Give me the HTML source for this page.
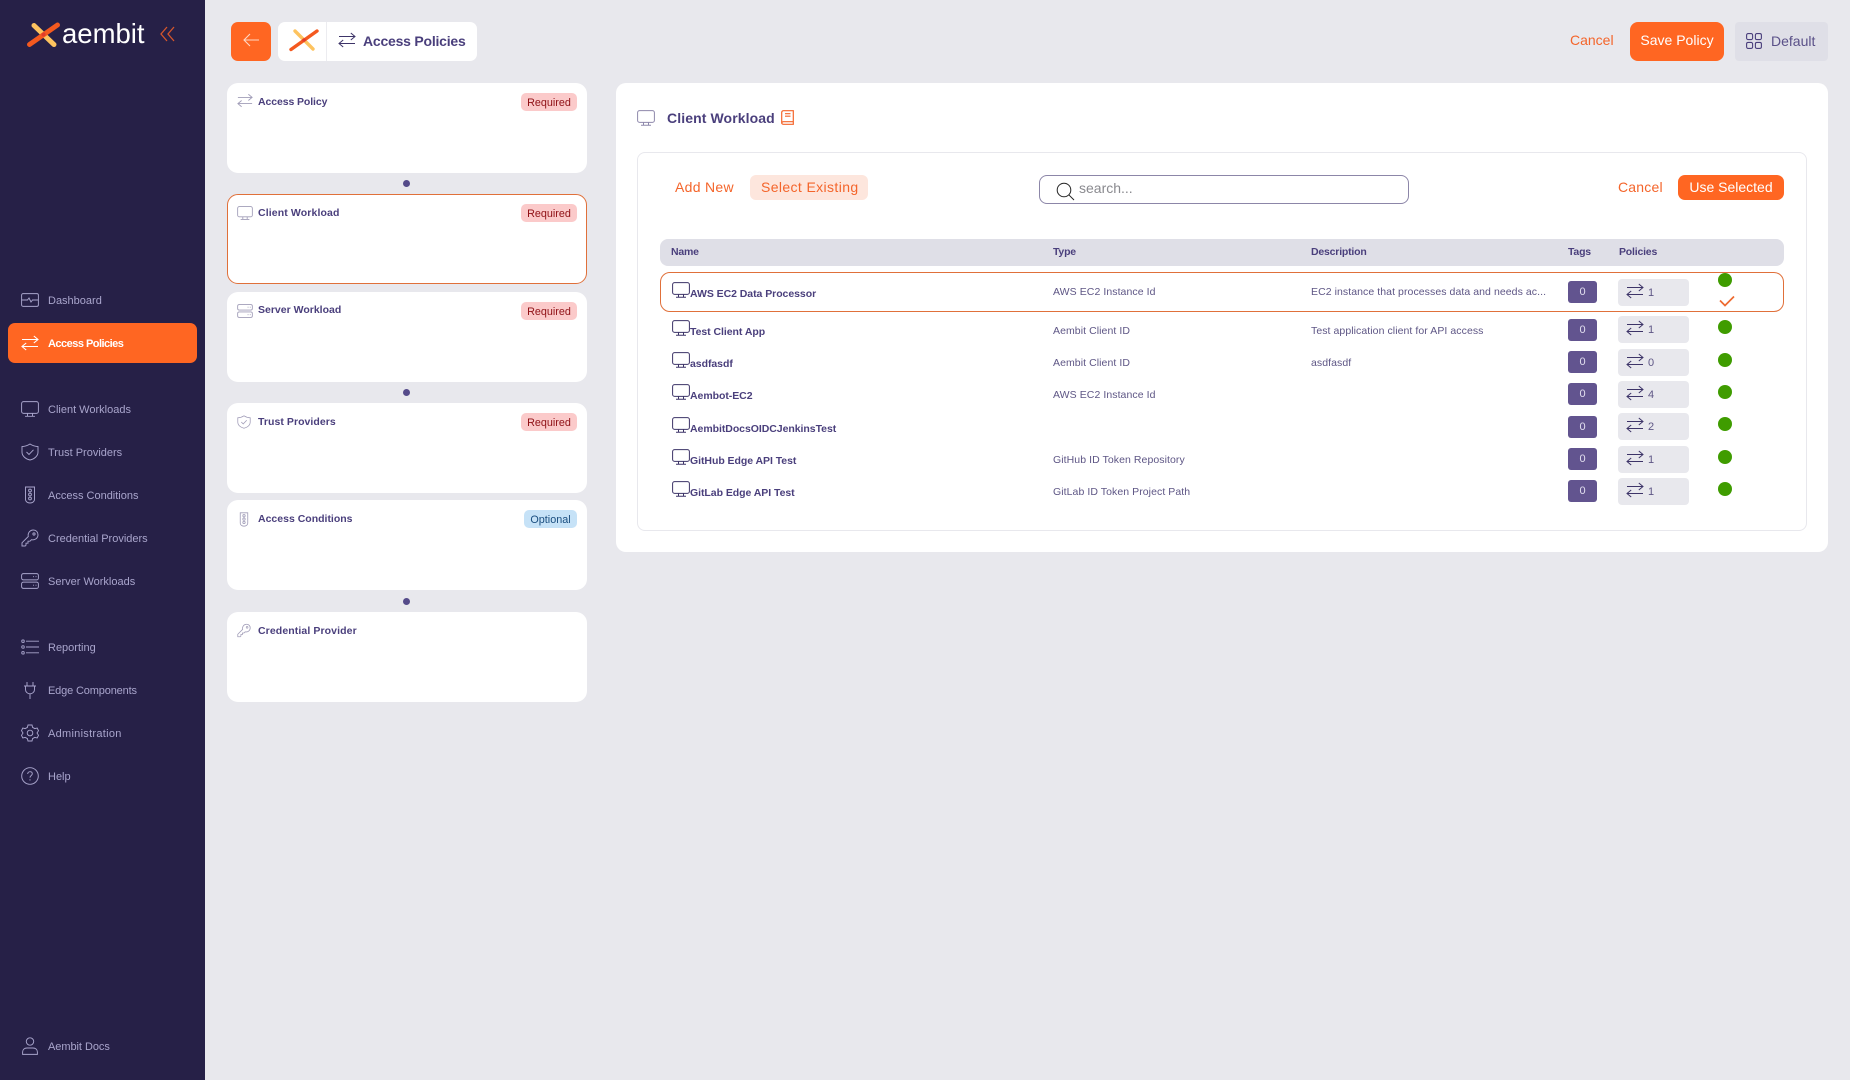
<!DOCTYPE html>
<html><head><meta charset="utf-8"><title>Access Policies</title>
<style>
html,body{margin:0;padding:0;width:1850px;height:1080px;overflow:hidden;background:#e8e8ed;font-family:"Liberation Sans",sans-serif}
.a{position:absolute}
.t{position:absolute;white-space:nowrap;line-height:20px;height:20px}
.nav{color:#a9a5cc;font-size:11px;left:48px;margin-top:1px}
.ic{position:absolute;fill:none;stroke:#a9a5cc;stroke-width:.95}
.card{position:absolute;left:227px;width:360px;height:90px;background:#fff;border-radius:11px}
.dot{position:absolute;left:403px;width:7px;height:7px;border-radius:50%;background:#554b8a}
.ct{left:258px;font-size:10.5px;font-weight:bold;color:#4a3f7c;letter-spacing:0;margin-top:1px}
.ci{position:absolute;left:237px;fill:none;stroke:#a19db8;stroke-width:1}
.bd{position:absolute;left:521px;width:56px;height:18px;line-height:20px;border-radius:5px;background:#fbcaca;color:#8f1015;font-size:10.8px;text-align:center}
.op{left:524px;width:53px;background:#c6e2f7;color:#1b4f80}
.n{left:690px;font-size:10.5px;font-weight:bold;color:#4a3f7c;letter-spacing:-.05px;margin-top:1px}
.ty{left:1053px;font-size:10.5px;color:#5e5685;letter-spacing:.07px;margin-top:1px}
.de{left:1311px;font-size:10.5px;color:#5e5685;letter-spacing:.07px;margin-top:1px}
.h{font-size:10.5px;font-weight:bold;color:#4a3f7c;letter-spacing:-.2px;margin-top:1px}
.tag{position:absolute;left:1568px;width:29px;height:22px;line-height:22px;background:#62548f;color:#e2dfef;border-radius:3px;font-size:11px;text-align:center}
.pol{position:absolute;left:1618px;width:71px;height:27px;background:#e8e8ed;border-radius:4px;border-bottom:0}
.pol svg{position:absolute;left:8px;top:4px;fill:none;stroke:#3d3468;stroke-width:1}
.pol span{position:absolute;left:30px;top:4px;line-height:20px;font-size:11px;color:#5e5685}
.g{position:absolute;left:1718px;width:14px;height:14px;border-radius:50%;background:#3f9c00}
.mon{position:absolute;left:672px;fill:none;stroke:#3d3468;stroke-width:1}
.or{color:#f4652b;font-size:14px}
</style></head>
<body>
<svg width="0" height="0" style="position:absolute">
<symbol id="arr" viewBox="0 0 18 16"><path d="M1 4.5H17M12.8 1L17 4.5L12.8 8M17 11.5H1M5.2 8L1 11.5L5.2 15"/></symbol>
<symbol id="mon" viewBox="0 0 18 16"><rect x=".6" y=".6" width="16.8" height="11.8" rx="2"/><path d="M6.5 12.5V15M11.5 12.5V15M4 15.3H14"/></symbol>
<symbol id="shield" viewBox="0 0 18 18"><path d="M9 1C11.5 2.6 14 3.4 17 3.6V9C17 13 13.5 16 9 17C4.5 16 1 13 1 9V3.6C4 3.4 6.5 2.6 9 1Z"/><path d="M5.5 9L8 11.5L12.5 6.8"/></symbol>
<symbol id="light" viewBox="0 0 14 18"><path d="M2.5 1H11.5V13.5C11.5 15.5 9.5 17 7 17C4.500 17 2.500 15.500 2.500 13.500Z"/><circle cx="7" cy="4.500" r="1.400"/><circle cx="7" cy="8.500" r="1.400"/><circle cx="7" cy="12.500" r="1.400"/></symbol>
<symbol id="key" viewBox="0 0 18 18"><path d="M1 17V13.800L7.300 7.500C6.500 4 9 1 12.300 1C15 1 17 3 17 5.700C17 9 14 11.500 10.500 10.700L9 12.200H7V14.200H5V16.200L4.200 17Z"/><circle cx="13" cy="5" r="1.100"/></symbol>
<symbol id="srv" viewBox="0 0 18 16"><rect x=".6" y=".6" width="16.800" height="6.300" rx="1.800"/><rect x=".6" y="9.100" width="16.800" height="6.300" rx="1.800"/><path d="M12 3.700H13M14.500 3.700H15.500M12 12.200H13M14.500 12.200H15.500"/></symbol>
</svg>

<!-- sidebar -->
<div class="a" style="left:0;top:0;width:205px;height:1080px;background:#262047"></div>
<svg class="a" style="left:26px;top:21px" width="36" height="27" viewBox="0 0 36 27" fill="none" stroke-linecap="round"><path d="M8 4.500L28 23.500" stroke="#fdc35f" stroke-width="5"/><path d="M3.500 23.500L31.500 4" stroke="#f4591f" stroke-width="5"/><circle cx="17.500" cy="13.500" r="2" fill="#e23c2a"/></svg>
<div class="t" style="left:62px;top:19px;height:30px;line-height:30px;font-size:27.5px;color:#fff">aembit</div>
<svg class="a" style="left:159px;top:25px" width="18" height="18" viewBox="0 0 18 18" fill="none" stroke="#d5562c" stroke-width="1.300"><path d="M8 2L2 9L8 16M15 2L9 9L15 16"/></svg>

<svg class="ic" style="left:21px;top:293px" width="18" height="14" viewBox="0 0 18 14"><rect x=".6" y=".6" width="16.800" height="12.800" rx="1.500"/><path d="M1 7H6.500L8 5L10 9L11.500 7H17"/></svg>
<div class="t nav" style="top:290px">Dashboard</div>
<div class="a" style="left:8px;top:323px;width:189px;height:40px;background:#ff6622;border-radius:7px"></div>
<svg class="a" style="left:21px;top:335px;fill:none;stroke:#fff;stroke-width:1.100" width="18" height="16"><use href="#arr"/></svg>
<div class="t" style="left:48px;top:334px;font-size:11px;color:#fff;font-weight:bold;letter-spacing:-.52px">Access Policies</div>
<svg class="ic" style="left:21px;top:401px" width="18" height="16"><use href="#mon"/></svg>
<div class="t nav" style="top:399px">Client Workloads</div>
<svg class="ic" style="left:21px;top:443px" width="18" height="18"><use href="#shield"/></svg>
<div class="t nav" style="top:442px">Trust Providers</div>
<svg class="ic" style="left:23px;top:486px" width="14" height="18"><use href="#light"/></svg>
<div class="t nav" style="top:485px">Access Conditions</div>
<svg class="ic" style="left:21px;top:529px" width="18" height="18"><use href="#key"/></svg>
<div class="t nav" style="top:528px">Credential Providers</div>
<svg class="ic" style="left:21px;top:573px" width="18" height="16"><use href="#srv"/></svg>
<div class="t nav" style="top:571px">Server Workloads</div>
<svg class="ic" style="left:21px;top:639px" width="18" height="16" viewBox="0 0 18 16"><rect x=".8" y="1" width="2.400" height="2.400" rx=".8"/><rect x=".8" y="6.800" width="2.400" height="2.400" rx=".8"/><rect x=".8" y="12.600" width="2.400" height="2.400" rx=".8"/><path d="M5 2.200H18M5 8H18M5 13.800H18"/></svg>
<div class="t nav" style="top:637px">Reporting</div>
<svg class="ic" style="left:23px;top:681px" width="14" height="18" viewBox="0 0 14 18"><path d="M4 1V5M10 1V5M1 5H13M2.500 5V8.500C2.500 11 4.500 12.800 7 12.800C9.500 12.800 11.500 11 11.500 8.500V5M7 12.800V18"/></svg>
<div class="t nav" style="top:680px;letter-spacing:-.15px">Edge Components</div>
<svg class="ic" style="left:21px;top:724px" width="18" height="18" viewBox="0 0 18 18"><path d="M7 1H11L11.600 3.400L13.800 4.600L16.200 4L17.500 6.700L16 9L17.500 11.300L16.200 14L13.800 13.400L11.600 14.600L11 17H7L6.400 14.600L4.200 13.400L1.800 14L.5 11.300L2 9L.5 6.700L1.800 4L4.200 4.600L6.400 3.400Z"/><circle cx="9" cy="9" r="2.800"/></svg>
<div class="t nav" style="top:723px;letter-spacing:.28px">Administration</div>
<svg class="ic" style="left:21px;top:767px" width="18" height="18" viewBox="0 0 18 18"><circle cx="9" cy="9" r="8.300"/><path d="M6.700 7C6.700 5.600 7.700 4.700 9 4.700C10.400 4.700 11.300 5.600 11.300 6.800C11.300 8.400 9 8.600 9 10.600M9 12.300V13.500"/></svg>
<div class="t nav" style="top:766px">Help</div>
<svg class="ic" style="left:22px;top:1037px" width="16" height="18" viewBox="0 0 16 18"><circle cx="8" cy="4.500" r="3.700"/><path d="M.6 17.400V15C.6 12.500 2.500 11 5 11H11C13.500 11 15.400 12.500 15.400 15V17.400Z"/></svg>
<div class="t nav" style="top:1036px;letter-spacing:-.05px">Aembit Docs</div>

<!-- top bar -->
<div class="a" style="left:231px;top:22px;width:40px;height:39px;background:#ff6622;border-radius:7px"></div>
<svg class="a" style="left:243px;top:32px" width="17" height="17" viewBox="0 0 17 17" fill="none" stroke="#ffd8c4" stroke-width="1.100"><path d="M1 8H16M7 2L1 8L7 14"/></svg>
<div class="a" style="left:278px;top:22px;width:199px;height:39px;background:#fff;border-radius:7px"></div>
<div class="a" style="left:326px;top:22px;width:1px;height:39px;background:#ececf0"></div>
<svg class="a" style="left:288px;top:27px" width="32" height="26" viewBox="0 0 32 26" fill="none" stroke-linecap="round"><path d="M7 4L25 22" stroke="#fdc35f" stroke-width="3.400"/><path d="M3 22.500L29 4" stroke="#f4591f" stroke-width="3.400"/><circle cx="16" cy="13" r="1.800" fill="#e23c2a"/></svg>
<svg class="a" style="left:338px;top:32px;fill:none;stroke:#3d3468;stroke-width:1" width="18" height="16"><use href="#arr"/></svg>
<div class="t" style="left:363px;top:31px;font-size:14px;font-weight:bold;color:#4a3f7c;letter-spacing:-.22px">Access Policies</div>

<div class="t or" style="left:1570px;top:30px">Cancel</div>
<div class="a" style="left:1630px;top:22px;width:94px;height:39px;line-height:37px;background:#ff6622;border-radius:8px;color:#fff;font-size:14px;text-align:center">Save Policy</div>
<div class="a" style="left:1735px;top:22px;width:93px;height:39px;background:#dfdfe7;border-radius:4px"></div>
<svg class="a" style="left:1746px;top:33px;fill:none;stroke:#4a3f7c;stroke-width:1.100" width="16" height="16"><rect x=".6" y=".6" width="6" height="6" rx="1.500"/><rect x="9.400" y=".6" width="6" height="6" rx="1.500"/><rect x=".6" y="9.400" width="6" height="6" rx="1.500"/><rect x="9.400" y="9.400" width="6" height="6" rx="1.500"/></svg>
<div class="t" style="left:1771px;top:31px;font-size:14px;color:#5a5088">Default</div>

<!-- left cards -->
<div class="card" style="top:83px"></div>
<svg class="ci" style="left:237px;top:93px" width="16" height="15"><use href="#arr"/></svg>
<div class="t ct" style="top:91px;letter-spacing:-.1px">Access Policy</div>
<div class="bd" style="top:93px">Required</div>
<div class="dot" style="top:180px"></div>

<div class="card" style="top:194px;height:90px;box-sizing:border-box;border:1px solid #e0703a"></div>
<svg class="ci" style="left:237px;top:206px" width="16" height="14"><use href="#mon"/></svg>
<div class="t ct" style="top:202px;letter-spacing:.12px">Client Workload</div>
<div class="bd" style="top:204px">Required</div>

<div class="card" style="top:292px"></div>
<svg class="ci" style="left:237px;top:304px" width="16" height="14"><use href="#srv"/></svg>
<div class="t ct" style="top:299px">Server Workload</div>
<div class="bd" style="top:302px">Required</div>
<div class="dot" style="top:389px"></div>

<div class="card" style="top:403px"></div>
<svg class="ci" style="left:237px;top:415px" width="14" height="14"><use href="#shield"/></svg>
<div class="t ct" style="top:411px;letter-spacing:.05px">Trust Providers</div>
<div class="bd" style="top:413px">Required</div>

<div class="card" style="top:500px"></div>
<svg class="ci" style="left:238px;top:512px" width="12" height="15"><use href="#light"/></svg>
<div class="t ct" style="top:508px">Access Conditions</div>
<div class="bd op" style="top:510px">Optional</div>
<div class="dot" style="top:598px"></div>

<div class="card" style="top:612px"></div>
<svg class="ci" style="left:237px;top:623px" width="14" height="15"><use href="#key"/></svg>
<div class="t ct" style="top:620px;letter-spacing:.1px">Credential Provider</div>

<!-- main panel -->
<div class="a" style="left:616px;top:83px;width:1212px;height:469px;background:#fff;border-radius:10px"></div>
<svg class="a" style="left:637px;top:110px;fill:none;stroke:#8e88ab;stroke-width:1" width="18" height="16"><use href="#mon"/></svg>
<div class="t" style="left:667px;top:108px;font-size:14px;font-weight:bold;color:#4a3f7c;letter-spacing:.1px">Client Workload</div>
<svg class="a" style="left:781px;top:110px;fill:none;stroke:#f4652b;stroke-width:1.200" width="13" height="15" viewBox="0 0 13 15"><path d="M2.500.7H12.300V11.700H2.500C1.500 11.700.7 12.300.7 13C.7 13.700 1.500 14.300 2.500 14.300H12.300V11.700M.7 13V2.500C.7 1.500 1.500.7 2.500.7M4 3.700H9.500M4 6.200H9.500"/></svg>
<div class="a" style="left:637px;top:152px;width:1170px;height:379px;box-sizing:border-box;border:1px solid #e8e8ed;border-radius:8px"></div>

<div class="t or" style="left:675px;top:177px;letter-spacing:.3px">Add New</div>
<div class="a" style="left:750px;top:175px;width:118px;height:25px;background:#fde6dd;border-radius:6px"></div>
<div class="t or" style="left:761px;top:177px;letter-spacing:.38px">Select Existing</div>
<div class="a" style="left:1039px;top:175px;width:370px;height:29px;box-sizing:border-box;border:1px solid #8c86a8;border-radius:8px"></div>
<svg class="a" style="left:1056px;top:182px" width="19" height="19" viewBox="0 0 19 19" fill="none" stroke="#222" stroke-width="1"><circle cx="8" cy="8" r="6.800"/><path d="M12.800 12.800L18 18"/></svg>
<div class="t" style="left:1079px;top:178px;font-size:14px;color:#8a8a8f">search...</div>
<div class="t or" style="left:1618px;top:177px;letter-spacing:.2px">Cancel</div>
<div class="a" style="left:1678px;top:175px;width:106px;height:25px;line-height:25px;background:#ff6622;border-radius:7px;color:#fff;font-size:14px;text-align:center">Use Selected</div>

<!-- table -->
<div class="a" style="left:660px;top:239px;width:1124px;height:27px;background:#dfdfe7;border-radius:8px"></div>
<div class="t h" style="left:671px;top:241px">Name</div>
<div class="t h" style="left:1053px;top:241px">Type</div>
<div class="t h" style="left:1311px;top:241px">Description</div>
<div class="t h" style="left:1568px;top:241px">Tags</div>
<div class="t h" style="left:1619px;top:241px">Policies</div>

<div class="a" style="left:660px;top:272px;width:1124px;height:40px;box-sizing:border-box;border:1px solid #e0703a;border-radius:10px"></div>

<svg class="mon" style="top:282px" width="18" height="16"><use href="#mon"/></svg>
<div class="t n" style="top:283px">AWS EC2 Data Processor</div>
<div class="t ty" style="top:281px">AWS EC2 Instance Id</div>
<div class="t de" style="top:281px">EC2 instance that processes data and needs ac...</div>
<div class="tag" style="top:281px">0</div>
<div class="pol" style="top:279px"><svg width="18" height="16"><use href="#arr"/></svg><span>1</span></div>
<div class="g" style="top:273px"></div>
<svg class="a" style="left:1719px;top:295px" width="16" height="12" viewBox="0 0 16 12" fill="none" stroke="#ee6a30" stroke-width="1.700"><path d="M1 5.500L6 10.500L15 1.500"/></svg>

<svg class="mon" style="top:320px" width="18" height="16"><use href="#mon"/></svg>
<div class="t n" style="top:321px">Test Client App</div>
<div class="t ty" style="top:320px">Aembit Client ID</div>
<div class="t de" style="top:320px">Test application client for API access</div>
<div class="tag" style="top:319px">0</div>
<div class="pol" style="top:316px"><svg width="18" height="16"><use href="#arr"/></svg><span>1</span></div>
<div class="g" style="top:320px"></div>

<svg class="mon" style="top:352px" width="18" height="16"><use href="#mon"/></svg>
<div class="t n" style="top:353px">asdfasdf</div>
<div class="t ty" style="top:352px">Aembit Client ID</div>
<div class="t de" style="top:352px">asdfasdf</div>
<div class="tag" style="top:351px">0</div>
<div class="pol" style="top:349px"><svg width="18" height="16"><use href="#arr"/></svg><span>0</span></div>
<div class="g" style="top:353px"></div>

<svg class="mon" style="top:384px" width="18" height="16"><use href="#mon"/></svg>
<div class="t n" style="top:385px">Aembot-EC2</div>
<div class="t ty" style="top:384px">AWS EC2 Instance Id</div>
<div class="tag" style="top:383px">0</div>
<div class="pol" style="top:381px"><svg width="18" height="16"><use href="#arr"/></svg><span>4</span></div>
<div class="g" style="top:385px"></div>

<svg class="mon" style="top:417px" width="18" height="16"><use href="#mon"/></svg>
<div class="t n" style="top:418px">AembitDocsOIDCJenkinsTest</div>
<div class="tag" style="top:416px">0</div>
<div class="pol" style="top:413px"><svg width="18" height="16"><use href="#arr"/></svg><span>2</span></div>
<div class="g" style="top:417px"></div>

<svg class="mon" style="top:449px" width="18" height="16"><use href="#mon"/></svg>
<div class="t n" style="top:450px">GitHub Edge API Test</div>
<div class="t ty" style="top:449px">GitHub ID Token Repository</div>
<div class="tag" style="top:448px">0</div>
<div class="pol" style="top:446px"><svg width="18" height="16"><use href="#arr"/></svg><span>1</span></div>
<div class="g" style="top:450px"></div>

<svg class="mon" style="top:481px" width="18" height="16"><use href="#mon"/></svg>
<div class="t n" style="top:482px">GitLab Edge API Test</div>
<div class="t ty" style="top:481px">GitLab ID Token Project Path</div>
<div class="tag" style="top:480px">0</div>
<div class="pol" style="top:478px"><svg width="18" height="16"><use href="#arr"/></svg><span>1</span></div>
<div class="g" style="top:482px"></div>
</body></html>
